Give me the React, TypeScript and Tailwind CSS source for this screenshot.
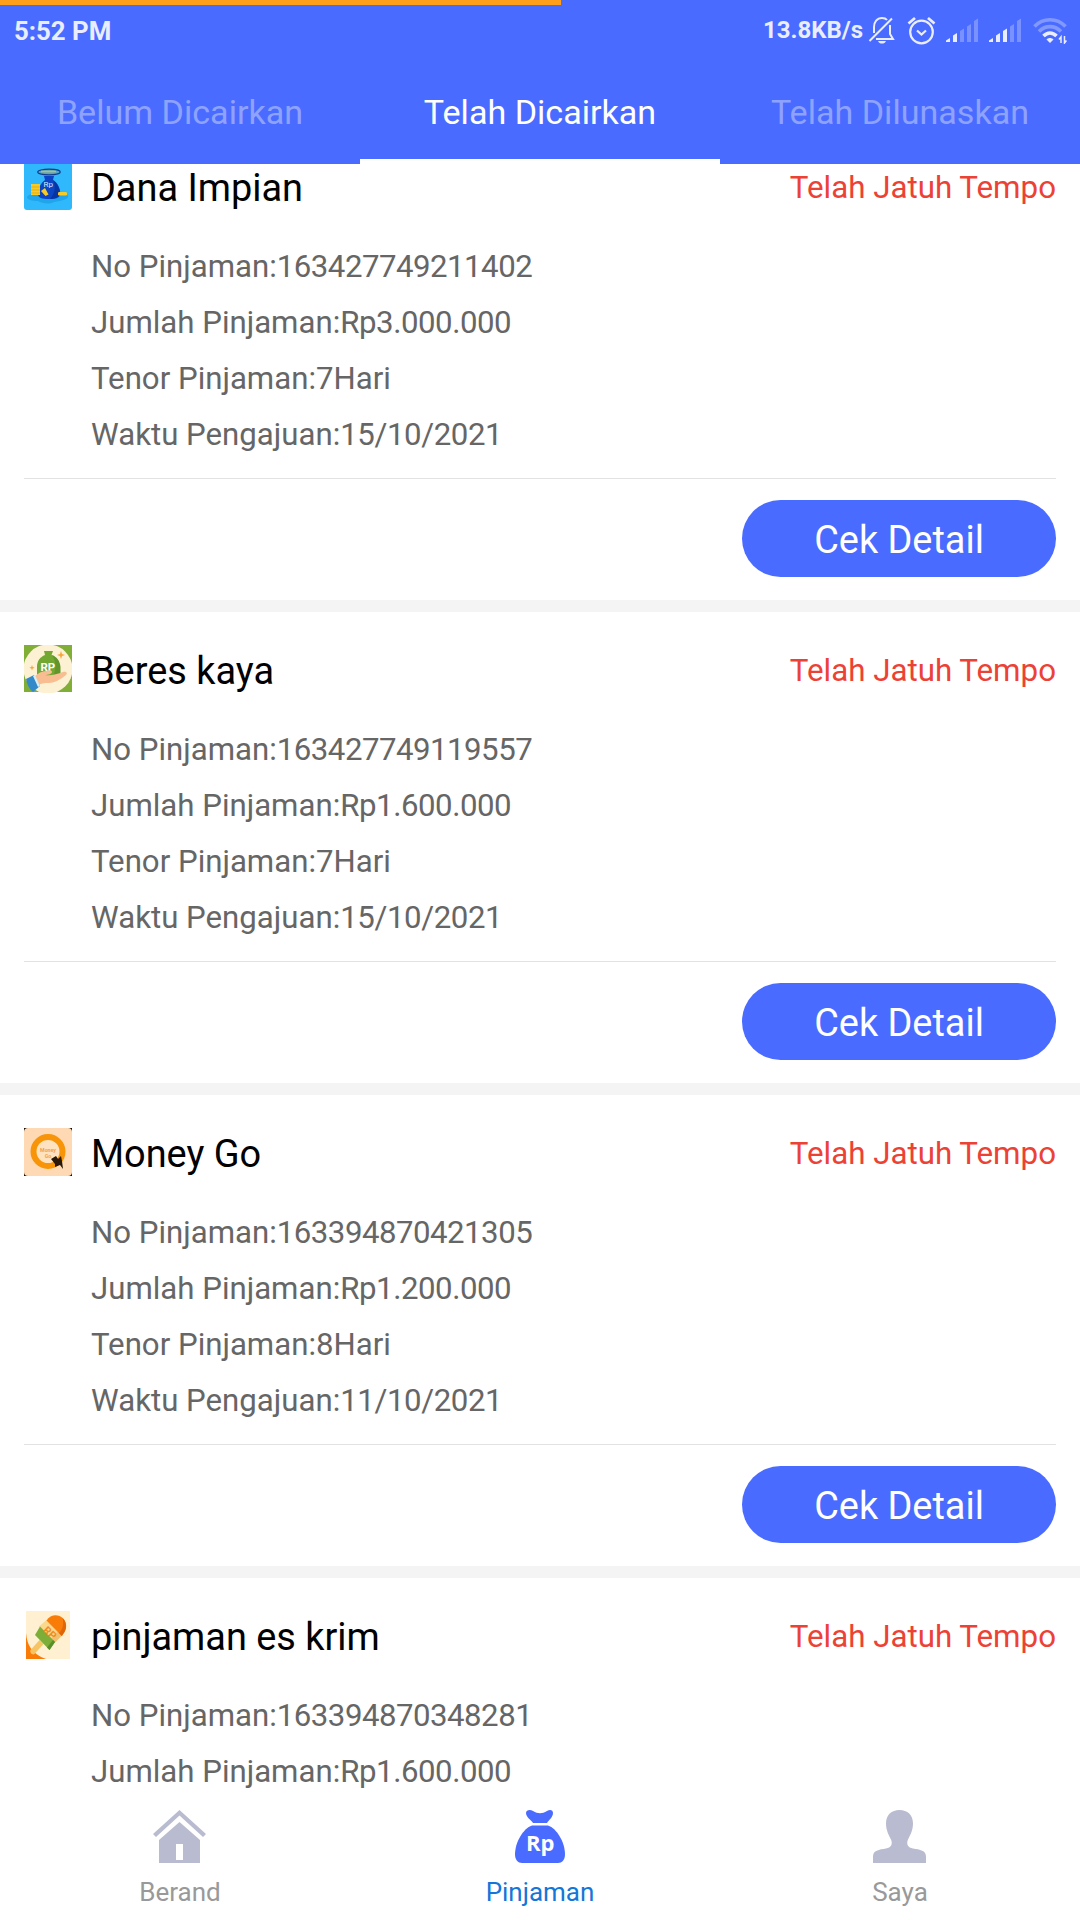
import React from 'react';

interface Loan {
  name: string;
  number: string;
  amount: string;
  tenor?: string;
  date?: string;
  icon: React.ReactNode;
}

function DanaImpianIcon() {
  return (
    <svg viewBox="0 0 48 48" className="h-12 w-12">
      <rect width="48" height="48" rx="3" fill="#2fb8fb" />
      <path d="M3 35c3-5 10-3 14-4h22c5 1 7 4 3 6-5 2-8 2-12 3-6 3-12 1-16-1-5 0-11-1-11-4z" fill="#20a4ea" />
      <path d="M20 14h10l-1 4c5 3 8 9 7 15-1 3-4 4-11 4s-11-1-11-5c0-6 3-11 7-14z" fill="#0b45c4" />
      <path d="M29 18c5 4 8 10 6 16-2 2-5 3-9 3 5-6 6-12 3-19z" fill="#0734a3" />
      <ellipse cx="25" cy="10" rx="11.300" ry="2.800" fill="#4fa9c9" stroke="#123c8e" strokeWidth="1.200" />
      <path d="M17 9.500h15" stroke="#d8b44f" strokeWidth="1.600" />
      <path d="M7 22h9v11H7z" fill="#f7ca25" />
      <path d="M7 25h9M7 28h9M7 31h9" stroke="#d9a31e" strokeWidth="0.700" />
      <path d="M17 29l4-3 3.500 6.500-3 1.500z" fill="#f7ca25" />
      <rect x="34" y="30" width="9" height="3.500" rx="1.200" fill="#f7ca25" />
      <text x="19.500" y="24.500" fill="#d8e8ff" fontSize="8" fontFamily="Roboto, sans-serif">Rp</text>
    </svg>
  );
}

function BeresKayaIcon() {
  return (
    <svg viewBox="0 0 48 48" className="h-12 w-12">
      <rect width="48" height="47" fill="#80ae36" />
      <circle cx="24" cy="24" r="24.500" fill="#fcf1d2" clipPath="inset(0)" />
      <path d="M20 6h9l-1.500 4c5 2 8 6 8.500 12v6c0 3-2 4-5 4H18c-3 0-5-1-5-4v-6c0-6 3-10 8-12z" fill="#72a732" />
      <path d="M28 10c5 2 8 6 8.500 12v6c0 3-2 4-5 4h-3c4-7 4-15-.5-22z" fill="#62962c" />
      <text x="16.500" y="25.500" fill="#fff" fontSize="11.500" fontWeight="700" fontFamily="Roboto, sans-serif">RP</text>
      <path d="M10 32c4-4 8-6 12-6 3-1 6-1 6 1s-4 3-7 3c6 1 12-1 18-3 3-1 5 1 3 3-5 4-11 8-17 8-5 0-8 0-11 3z" fill="#f8bd91" />
      <path d="M2 34l8-4 6 11-7 6c-4-3-6-8-7-13z" fill="#3489c8" />
      <path d="M9 31l2-1 5 11-2 1z" fill="#d8eef6" />
      <path d="M37 6l1 3 3 1-3 1-1 3-1-3-3-1 3-1zM8 20l.7 2 2 .7-2 .7L8 25.500l-.7-2-2-.7 2-.7z" fill="#f6a63a" />
    </svg>
  );
}

function MoneyGoIcon() {
  return (
    <svg viewBox="0 0 48 48" className="h-12 w-12">
      <rect width="48" height="48" fill="#160d06" />
      <rect width="48" height="48" rx="4" fill="#fed9b4" />
      <circle cx="24" cy="23.500" r="14.500" fill="#ffe3c1" stroke="#f79408" strokeWidth="6" />
      <g fill="#f0a150" fontSize="5.200" fontWeight="700" fontFamily="Roboto, sans-serif" textAnchor="middle">
        <text x="24" y="23.500">Money</text>
        <text x="24" y="29.500">Go</text>
      </g>
      <path d="M27 31l5-3 2 3 3-3 1 5 1 8-3-4-5 2v-3z" fill="#291809" />
    </svg>
  );
}

function EsKrimIcon() {
  return (
    <svg viewBox="0 0 48 48" className="h-12 w-12">
      <rect x="2" width="41" height="48" fill="#fff0d2" />
      <rect x="43" width="3" height="48" fill="#fff0d2" />
      <path d="M2 22c1 12 6 21 20 26H2z" fill="#fa7c08" />
      <path d="M6.500 39l9-10 4 4-9 10c-2 1.500-5-1-4-4z" fill="#f5c565" />
      <path d="M15 15.500L22.500 9l15.500 15.500-7 7z" fill="#fbd88c" />
      <path d="M34 20.500l4 4-7 7-4-4z" fill="#efc070" />
      <path d="M22.500 9.500C26 4 33 2.500 38 6.500c5 4 5 10 2.500 14.500l-2.700 4z" fill="#fa7c08" />
      <path d="M38.500 7c4 3.500 4.500 9.500 2 14l-2.700 4-2.800-3c4-4 5-9.500 3.500-15z" fill="#df6509" />
      <path d="M16 15.500l15 15.500-5.500 8L11 24z" fill="#7dae38" />
      <path d="M29 29l2 2-5.500 8-2.500-2.500z" fill="#598f2b" />
      <text x="18.500" y="20" fill="#f08b21" fontSize="10.500" fontWeight="700" fontFamily="Roboto, sans-serif" transform="rotate(43 18.500 20)">RP</text>
    </svg>
  );
}

const loans: Loan[] = [
  { name: 'Dana Impian', number: '163427749211402', amount: 'Rp3.000.000', tenor: '7Hari', date: '15/10/2021', icon: <DanaImpianIcon /> },
  { name: 'Beres kaya', number: '163427749119557', amount: 'Rp1.600.000', tenor: '7Hari', date: '15/10/2021', icon: <BeresKayaIcon /> },
  { name: 'Money Go', number: '163394870421305', amount: 'Rp1.200.000', tenor: '8Hari', date: '11/10/2021', icon: <MoneyGoIcon /> },
  { name: 'pinjaman es krim', number: '163394870348281', amount: 'Rp1.600.000', icon: <EsKrimIcon /> },
];

function Signal({ strength }: { strength: number }) {
  return (
    <svg viewBox="0 0 33 25" className="h-[25px] w-[33px]" fill="#e9edff">
      <path d="M0 24v-1.500L4 20v4z" />
      <path d="M7 17.500l4-2.500v9H7z" opacity={strength > 1 ? 1 : 0.3} />
      <path d="M14 13l4-2.500V24h-4z" opacity={strength > 2 ? 1 : 0.3} />
      <path d="M21 8.500L25 6v18h-4z" opacity="0.3" />
      <path d="M28 3l4-2.500V24h-4z" opacity="0.3" />
    </svg>
  );
}

function StatusBar() {
  return (
    <div className="flex h-[60px] items-center justify-between pr-[13px] pl-[14px] text-[#e9edff]">
      <span className="pt-px text-[25.8px] leading-[26px] font-bold">5:52 PM</span>
      <div className="flex items-center">
        <span className="text-[24px] leading-none font-bold">13.8KB/s</span>
        <svg viewBox="0 0 27 28" className="ml-[5px] h-7 w-[27px]" fill="none" stroke="#e9edff" strokeWidth="2">
          <path d="M6 17V11c0-5 3-9 8-9 2 0 4 .6 5 2M22 9v9l3 5H8" />
          <path d="M1.500 25L24 2.500" />
          <path d="M10 25h8c-1 2-2 2.500-4 2.500s-3-.5-4-2.500z" fill="#e9edff" stroke="none" />
        </svg>
        <svg viewBox="0 0 29 29" className="ml-[12px] h-[29px] w-[29px]" fill="none" stroke="#e9edff" strokeWidth="2.200">
          <circle cx="14.500" cy="16" r="11.300" />
          <path d="M10 14.500l4.500 4 4.500-4" />
          <path d="M1.500 7.500L8 2M27.500 7.500L21 2" strokeWidth="2.800" />
        </svg>
        <div className="ml-[10px] flex gap-[10px]">
          <Signal strength={2} />
          <Signal strength={3} />
        </div>
        <svg viewBox="0 0 34 27" className="ml-[11px] h-[27px] w-[34px]" fill="none" stroke="#e9edff" strokeWidth="3.600">
          <path d="M1.500 9.500c8.500-9 22.500-9 31 0" opacity="0.35" />
          <path d="M6 14.500c6.500-6.500 15.500-6.500 22 0" opacity="0.35" />
          <path d="M10.500 19c4-4 9-4 13 0" />
          <path d="M13.500 22.500c2-2 5-2 7 0L17 26z" fill="#e9edff" stroke="none" />
          <path d="M28 26v-6l-2 2.500M31.500 19v7l2-2.500" strokeWidth="1.500" />
        </svg>
      </div>
    </div>
  );
}

function LoanCard({ loan }: { loan: Loan }) {
  return (
    <article className="h-[483px] border-b-[12px] border-[#f4f4f4] bg-white px-6">
      <div className="flex h-[52px] justify-between pt-[33px] box-content">
        <div className="flex gap-[19px]">
          {loan.icon}
          <h2 className="pt-px text-[37.9px] leading-[50px] text-black">{loan.name}</h2>
        </div>
        <span className="pt-px text-[31.3px] leading-[50px] text-[#ec4236]">Telah Jatuh Tempo</span>
      </div>
      <div className="mt-[25px] h-[224px] pl-[67px] text-[31.2px] leading-[56px] text-[#666]">
        <p>No Pinjaman:<span className="tracking-[-0.5px]">{loan.number}</span></p>
        <p>Jumlah Pinjaman:<span className="tracking-[-0.45px]">{loan.amount}</span></p>
        {loan.tenor && <p>Tenor Pinjaman:{loan.tenor}</p>}
        {loan.date && <p>Waktu Pengajuan:<span className="tracking-[-0.4px]">{loan.date}</span></p>}
      </div>
      {loan.date && (
        <div className="mt-[15px] flex justify-end border-t border-[#e2e2e2] pt-[21px]">
          <button className="h-[77px] w-[314px] rounded-full bg-[#4a6bff] pt-[4px] text-[37.9px] leading-none text-white">Cek Detail</button>
        </div>
      )}
    </article>
  );
}

export default function App() {
  return (
    <div className="flex h-[1920px] w-[1080px] flex-col overflow-hidden bg-white font-['Roboto',sans-serif]">
      <header className="relative h-[164px] shrink-0 bg-[#4a6bff]">
        <div className="absolute top-0 left-0 h-[5px] w-[561px] bg-[#ff9f1c]" />
        <StatusBar />
        <nav className="grid h-[104px] grid-cols-3 text-center text-[34.1px] leading-[105px] text-[#8ea3ff]">
          <span>Belum Dicairkan</span>
          <span className="h-[104px] border-b-[5px] border-white text-white">Telah Dicairkan</span>
          <span>Telah Dilunaskan</span>
        </nav>
      </header>

      <main className="min-h-0 flex-1 overflow-hidden">
        <div className="-mt-[35px]">
          {loans.map((loan) => (
            <LoanCard key={loan.number} loan={loan} />
          ))}
        </div>
      </main>

      <footer className="grid h-[124px] shrink-0 grid-cols-3 bg-white pt-[13px] text-[26px] leading-[30px] text-[#999]">
        <div className="flex flex-col items-center gap-[14px]">
          <svg viewBox="0 0 54 54" className="h-[54px] w-[54px]" fill="#b9bbd0">
            <path d="M26.500 1L53 25l-3 3L26.500 6.500 3 28l-3-3z" />
            <path fillRule="evenodd" d="M26.500 13L47 31v23H6V31zM23 35v16h7V35z" />
          </svg>
          <span>Berand</span>
        </div>
        <div className="flex flex-col items-center gap-[14px] text-[#1476d8]">
          <svg viewBox="0 0 50 54" className="h-[54px] w-[50px]" fill="#4a6bff">
            <path d="M11 4c0-3 4-4 7-2 5 3 9 3 14 0 3-2 6-1 6 2 0 4-4 7-6 10H18c-2-3-7-6-7-10z" />
            <path d="M17 16.500h16c9 3 17 17 17 29 0 5-3 8.500-7 8.500H7c-4 0-7-3.500-7-8.500 0-12 8-26 17-29z" />
            <text x="11" y="42" fill="#fff" fontSize="22" fontWeight="700" fontFamily="Open Sans, sans-serif">Rp</text>
          </svg>
          <span>Pinjaman</span>
        </div>
        <div className="flex flex-col items-center gap-[14px]">
          <svg viewBox="0 0 54 54" className="h-[54px] w-[54px]" fill="#b9bbd0">
            <path d="M26.500 1C34.500 1 40 6 40 14.500c0 7-3 12-5 16-2 5 0 8 5 9 7 1 13 2 13 8V54H0v-6.500c0-6 6-7 13-8 5-1 7-4 5-9-2-4-5-9-5-16C13 6 18.500 1 26.500 1z" />
          </svg>
          <span>Saya</span>
        </div>
      </footer>
    </div>
  );
}
